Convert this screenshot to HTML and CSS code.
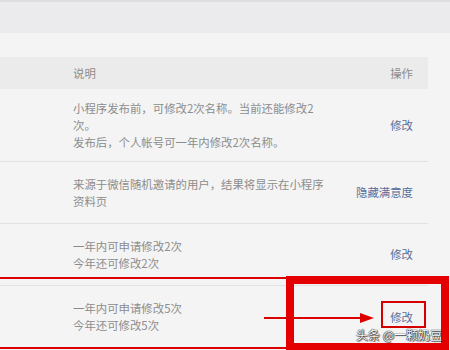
FILE: index.html
```html
<!DOCTYPE html>
<html lang="zh-CN">
<head>
<meta charset="utf-8">
<title>设置</title>
<link rel="stylesheet" href="styles.css">
</head>
<body>
<div class="topbar"></div>
<div class="spacer"></div>
<div class="table">
  <div class="row head">
    <div></div>
    <div class="desc">说明</div>
    <div class="act head-act">操作</div>
  </div>
  <div class="row r1">
    <div></div>
    <div class="desc">小程序发布前，可修改2次名称。当前还能修改2<br>次。<br>发布后，个人帐号可一年内修改2次名称。</div>
    <div class="act"><a class="link">修改</a></div>
  </div>
  <div class="row">
    <div></div>
    <div class="desc">来源于微信随机邀请的用户，结果将显示在小程序<br>资料页</div>
    <div class="act"><a class="link">隐藏满意度</a></div>
  </div>
  <div class="row">
    <div></div>
    <div class="desc">一年内可申请修改2次<br>今年还可修改2次</div>
    <div class="act"><a class="link">修改</a></div>
  </div>
  <div class="row last">
    <div></div>
    <div class="desc">一年内可申请修改5次<br>今年还可修改5次</div>
    <div class="act"><a class="link">修改</a></div>
  </div>
</div>

<div class="mark-row"></div>
<div class="mark-big"></div>
<div class="mark-small"></div>
<svg class="arrow" width="112" height="12" viewBox="0 0 112 12">
  <line x1="0" y1="6" x2="100" y2="6" stroke="#dc0000" stroke-width="2.2"/>
  <polygon points="96,1 110,6 96,11" fill="#dc0000"/>
</svg>
<div class="watermark">头条 @一颗奶豆</div>
</body>
</html>
```

FILE: styles.css
```css
html, body {
  margin: 0;
  padding: 0;
}
body {
  width: 450px;
  height: 350px;
  overflow: hidden;
  background: #f4f4f4;
  font-family: "Noto Sans CJK SC", "Noto Sans", sans-serif;
  font-size: 11.4px;
  line-height: 17px;
  color: #8c8c8c;
  position: relative;
}
.topbar {
  height: 31px;
  background: #ebebed;
  border-top: 2px solid #dedee0;
}
.spacer {
  height: 24px;
}
.table {
  width: 428px;
}
.row {
  display: grid;
  grid-template-columns: 73px 1fr auto;
  align-items: center;
  box-sizing: border-box;
  height: 62px;
  padding-right: 15px;
  border-bottom: 1px solid #e2e2e2;
}
.row.head {
  height: 32px;
  background: #ebebeb;
  border-bottom: none;
  color: #8c8c8c;
}
.row.r1 {
  height: 73px;
}
.row.last {
  border-bottom: none;
}
.act {
  text-align: right;
}
.link {
  color: #586c98;
  text-decoration: none;
}
.mark-row {
  position: absolute;
  left: -10px;
  top: 277px;
  width: 300px;
  height: 72px;
  box-sizing: border-box;
  border: 2px solid #dc0000;
}
.mark-big {
  position: absolute;
  left: 286px;
  top: 276px;
  width: 163px;
  height: 75px;
  box-sizing: border-box;
  border: 8px solid #e40000;
}
.mark-small {
  position: absolute;
  left: 381px;
  top: 301px;
  width: 45px;
  height: 27px;
  box-sizing: border-box;
  border: 2px solid #d40000;
}
.arrow {
  position: absolute;
  left: 264px;
  top: 312px;
}
.watermark {
  position: absolute;
  left: 356px;
  top: 327px;
  font-size: 12px;
  line-height: 16px;
  color: #ffffff;
  text-shadow: 0 0 1px #000, 0 0 1px #000, 1px 1px 1px rgba(0,0,0,0.6);
  white-space: nowrap;
}
```
